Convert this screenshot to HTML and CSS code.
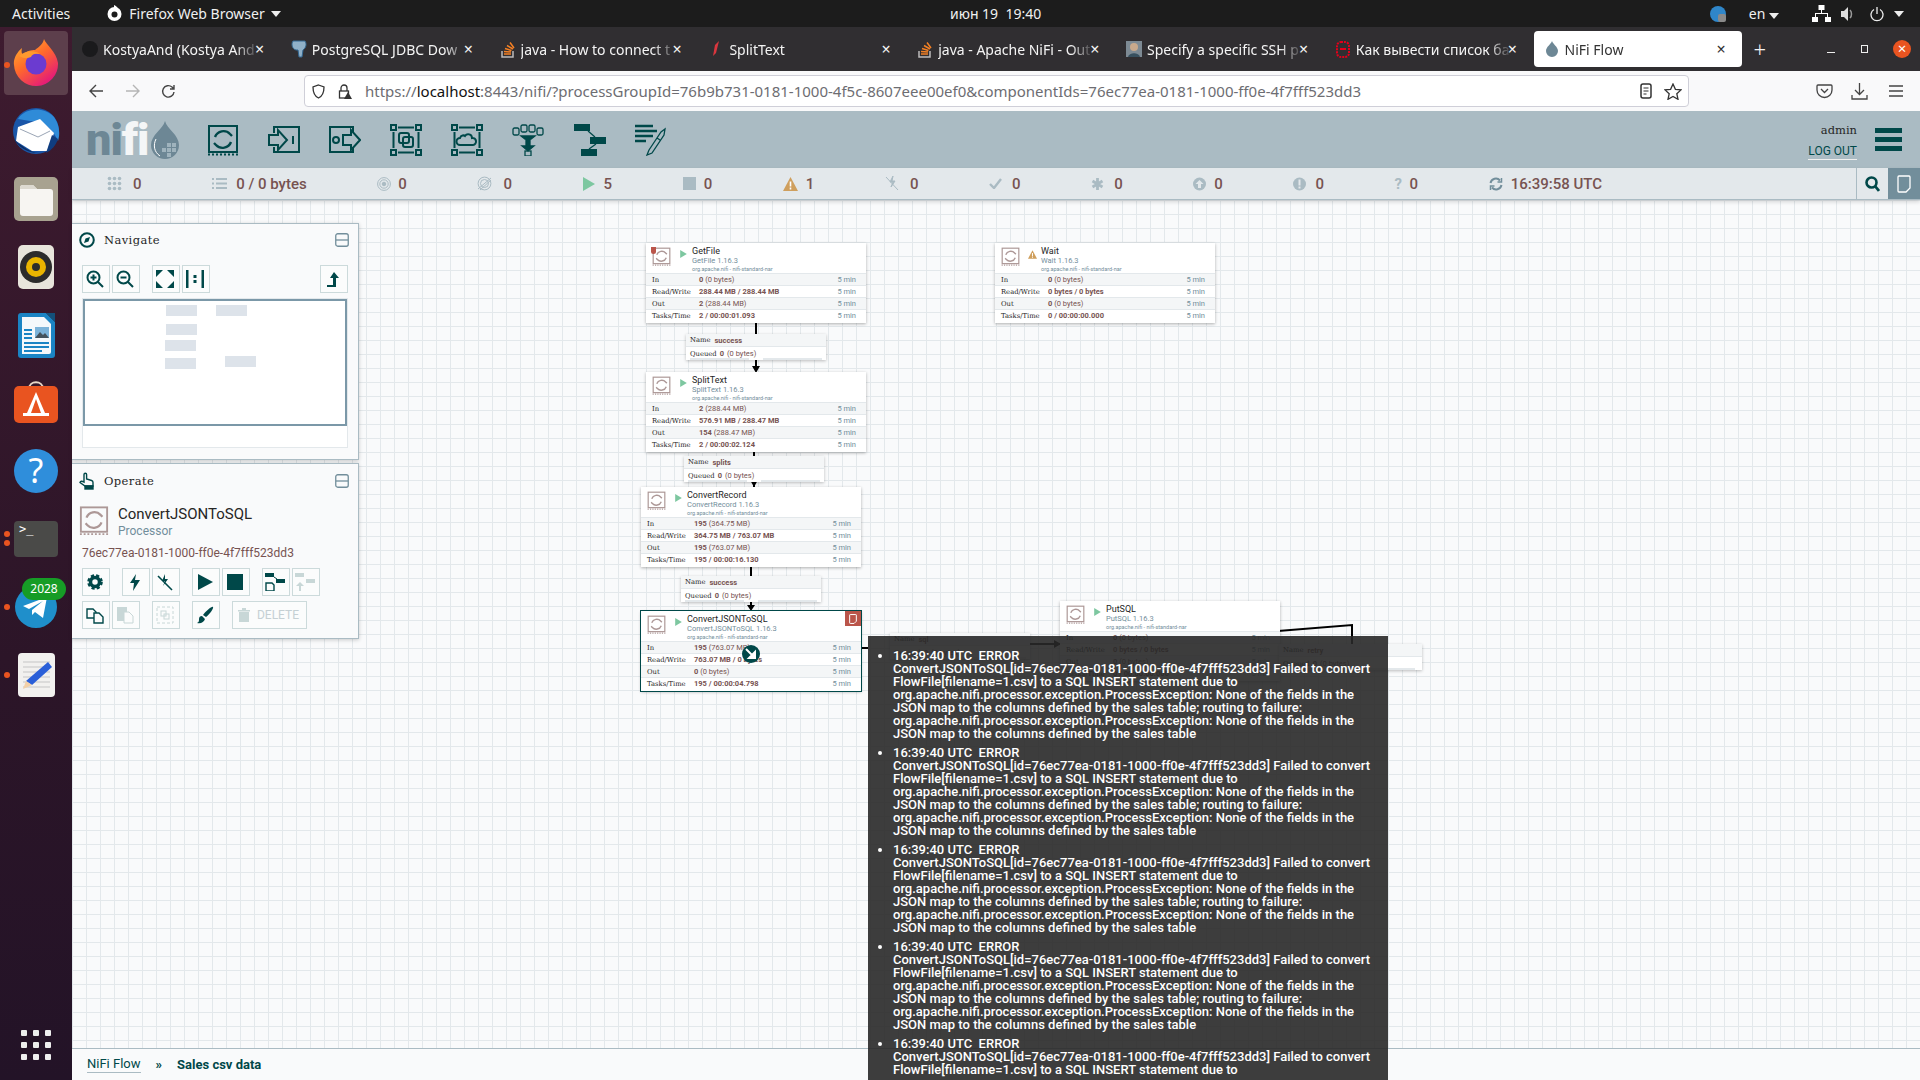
FILE: index.html
```html
<!DOCTYPE html>
<html lang="en">
<head>
  <meta charset="UTF-8">
  <title>NiFi Flow</title>
  <link rel="stylesheet" href="styles.css">
</head>
<body>
  <svg class="defs" width="0" height="0">
    <symbol id="proc" viewBox="0 0 32 32">
      <rect x="2" y="2" width="28" height="26" fill="none" stroke="currentColor" stroke-width="2"/>
      <path d="M1 30.500h30" stroke="currentColor" stroke-width="2" stroke-dasharray="2 2"/>
      <path d="M8 13a9 9 0 0 1 15-3l2 2" fill="none" stroke="currentColor" stroke-width="2.400"/>
      <path d="M24 18a9 9 0 0 1-15 3l-2-2" fill="none" stroke="currentColor" stroke-width="2.400"/>
    </symbol>
    <symbol id="play" viewBox="0 0 10 12"><path d="M0 0l10 6-10 6z" fill="currentColor"/></symbol>
    <symbol id="minimize" viewBox="0 0 14 14">
      <rect x="0.750" y="0.750" width="12.500" height="12.500" rx="2" fill="none" stroke="#728e9b" stroke-width="1.300"/>
      <path d="M1 7h12" stroke="#728e9b" stroke-width="1.300"/>
    </symbol>
  </svg>

  <header class="topbar">
    <span class="topbar-item activities">Activities</span>
    <span class="topbar-item app-menu">
      <svg width="17" height="17" viewBox="0 0 17 17"><circle cx="8.500" cy="9" r="7" fill="#fff"/><circle cx="8.500" cy="9.500" r="3" fill="#1d1d1d"/><path d="M8 0c3 1 4 3 4 5L8 5z" fill="#fff"/></svg>
      Firefox Web Browser <i class="caret"></i>
    </span>
    <span class="clock">июн 19&nbsp; 19:40</span>
    <span class="tray">
      <svg class="tray-dot" width="16" height="16" viewBox="0 0 16 16"><circle cx="8" cy="8" r="8" fill="#2f86c9"/><rect x="8" y="8" width="8" height="8" rx="2" fill="#8a8a8a"/></svg>
      <span class="tray-lang">en <i class="caret"></i></span>
      <svg class="tray-net" width="19" height="17" viewBox="0 0 19 17" fill="#fff"><rect x="6.500" y="0" width="6" height="5"/><rect x="0" y="12" width="6" height="5"/><rect x="13" y="12" width="6" height="5"/><path d="M9 5h1v3h6v4h-1V9H4v3H3V8h6z"/></svg>
      <svg class="tray-vol" width="13" height="14" viewBox="0 0 13 14"><path d="M0 4h3l4-4v14l-4-4H0z" fill="#ddd"/><path d="M9 3c2 2 2 6 0 8" fill="none" stroke="#999" stroke-width="1.500"/></svg>
      <svg class="tray-pow" width="14" height="16" viewBox="0 0 14 16"><path d="M4 3.500a6 6 0 1 0 6 0" fill="none" stroke="#eee" stroke-width="1.300"/><path d="M7 1v7" stroke="#eee" stroke-width="1.300"/></svg>
      <i class="caret"></i>
    </span>
  </header>

  <div class="desktop">
    <nav class="dock">
      <div class="dock-slot dock-active">
        <i class="run-dot"></i>
        <svg width="46" height="48" viewBox="0 0 46 48">
          <defs><linearGradient id="fx" x1="0" y1="0" x2="0.700" y2="1"><stop offset="0" stop-color="#ffbd2e"/><stop offset=".5" stop-color="#ff6a2b"/><stop offset="1" stop-color="#e3177c"/></linearGradient></defs>
          <path d="M31 0c2 6 12 12 14 24a22 22 0 0 1-44 2C0 20 4 13 9 9c-1 4 0 6 1 7 3-4 8-5 12-5 4-3 8-6 9-11z" fill="url(#fx)"/>
          <circle cx="23" cy="25" r="10.500" fill="#6b3bd0"/>
          <path d="M6 17c6-6 16-6 21-2-6-1-8 1-9 3-4 2-9 1-12-1z" fill="#ff9a2e"/>
        </svg>
      </div>
      <div class="dock-slot">
        <svg width="48" height="48" viewBox="0 0 48 48">
          <circle cx="24" cy="24" r="23" fill="#1a56a8"/>
          <path d="M6 12C12 2 30-2 42 10c6 8 6 18 4 24-6-14-16-20-28-20z" fill="#2f8bd8"/>
          <path d="M6 20l22-8 14 14-6 18H20L4 34z" fill="#fff"/>
          <path d="M8 22l18 8 12-6" fill="none" stroke="#9aa5b5" stroke-width="1"/>
          <path d="M2 32c4 8 14 14 24 14-8-1-14-6-20-10z" fill="#0c2f66"/>
          <path d="M40 28l-6 18c6-3 10-8 12-14z" fill="#0f3d80"/>
        </svg>
      </div>
      <div class="dock-slot">
        <svg width="44" height="44" viewBox="0 0 44 44">
          <rect width="44" height="44" rx="5" fill="#a8a290"/>
          <path d="M6 11a3 3 0 0 1 3-3h10l4 4h13a3 3 0 0 1 3 3v21a3 3 0 0 1-3 3H9a3 3 0 0 1-3-3z" fill="#f7f5f2"/>
          <path d="M6 11a3 3 0 0 1 3-3h10l4 4H6z" fill="#ddd9d0"/>
        </svg>
      </div>
      <div class="dock-slot">
        <svg width="36" height="44" viewBox="0 0 36 44">
          <rect width="36" height="44" rx="5" fill="#e8e5dc"/>
          <circle cx="18" cy="22" r="16" fill="#2c2c2c"/>
          <circle cx="18" cy="22" r="10" fill="#e9b500"/>
          <circle cx="18" cy="22" r="4" fill="#2c2c2c"/>
        </svg>
      </div>
      <div class="dock-slot">
        <svg width="37" height="45" viewBox="0 0 37 45">
          <path d="M3 0h25l9 9v33a3 3 0 0 1-3 3H3a3 3 0 0 1-3-3V3a3 3 0 0 1 3-3z" fill="#1a84c4"/>
          <path d="M4 4h22l7 7v28a2 2 0 0 1-2 2H4z" fill="#f4f8fb"/>
          <path d="M28 0h9v9z" fill="#13507a"/>
          <path d="M6 16h8v2H6zM6 20h8v2H6zM6 24h8v2H6zM6 29h25v2H6zM6 33h25v2H6zM6 37h18v2H6z" fill="#1a84c4"/>
          <rect x="17" y="14" width="14" height="11" fill="#7cb3d9"/>
          <path d="M17 25l5-6 3 3 2-2 4 5z" fill="#44525c"/>
        </svg>
      </div>
      <div class="dock-slot">
        <svg width="44" height="44" viewBox="0 0 44 44">
          <path d="M15 8c0-9 14-9 14 0" fill="none" stroke="#e8d8c8" stroke-width="2"/>
          <rect y="5" width="44" height="37" rx="5" fill="#e95420"/>
          <path d="M22 11l-9 21h-4v3h26v-3h-4zM22 18l5 14H17z" fill="#fff"/>
        </svg>
      </div>
      <div class="dock-slot">
        <svg width="44" height="44" viewBox="0 0 44 44">
          <circle cx="22" cy="22" r="22" fill="#2f8edb"/>
          <text class="dock-help" x="22" y="34" text-anchor="middle">?</text>
        </svg>
      </div>
      <div class="dock-slot">
        <i class="run-dot run-dot-a"></i><i class="run-dot run-dot-b"></i>
        <div class="term-icon">&gt;_</div>
      </div>
      <div class="dock-slot">
        <i class="run-dot"></i>
        <svg width="42" height="42" viewBox="0 0 42 42">
          <circle cx="21" cy="21" r="21" fill="#1f8fcb"/>
          <path d="M8 20l24-9-4 21-8-6-3 3v-5l11-9-14 8z" fill="#fff"/>
        </svg>
        <span class="dock-badge">2028</span>
      </div>
      <div class="dock-slot">
        <i class="run-dot"></i>
        <svg width="37" height="44" viewBox="0 0 37 44">
          <rect width="37" height="44" rx="4" fill="#f2f1ef"/>
          <path d="M5 9h27M5 14h27M5 19h27M5 24h27M5 29h27M5 34h27" stroke="#c5c5c5" stroke-width="1"/>
          <path d="M30 9l4 5-20 18-6-4z" fill="#2a5fd8"/>
          <path d="M8 28l6 4-9 4z" fill="#f2d0a8"/>
        </svg>
      </div>
      <div class="dock-apps"><i></i><i></i><i></i><i></i><i></i><i></i><i></i><i></i><i></i></div>
    </nav>

    <div class="browser">
      <div class="tabs">
        <div class="tab"><svg class="fav" width="16" height="16" viewBox="0 0 16 16"><circle cx="8" cy="8" r="8" fill="#1a1a1c"/></svg><span class="tab-title">KostyaAnd (Kostya And</span><span class="tab-x">×</span></div>
        <div class="tab"><svg class="fav" width="16" height="18" viewBox="0 0 16 18"><path d="M2 1h12c2 3 1 7-2 9l-1 7H8L7 10H5C1 9 0 4 2 1z" fill="#8fb0c8" stroke="#336791"/></svg><span class="tab-title">PostgreSQL JDBC Dow</span><span class="tab-x">×</span></div>
        <div class="tab"><svg class="fav" width="14" height="17" viewBox="0 0 14 17"><path d="M1 10v6h11v-6" fill="none" stroke="#bcbbbb" stroke-width="1.500"/><path d="M3 13h7M3 10.500l7 .6M4 7.500l6.500 2M6 4.500l6 3.500M9 1.500l4 5.500" stroke="#f48024" stroke-width="1.500"/></svg><span class="tab-title">java - How to connect t</span><span class="tab-x">×</span></div>
        <div class="tab"><svg class="fav" width="8" height="16" viewBox="0 0 8 16"><path d="M7 0L3 4 1 15l3-3z" fill="#d9363e"/></svg><span class="tab-title">SplitText</span><span class="tab-x">×</span></div>
        <div class="tab"><svg class="fav" width="14" height="17" viewBox="0 0 14 17"><path d="M1 10v6h11v-6" fill="none" stroke="#bcbbbb" stroke-width="1.500"/><path d="M3 13h7M3 10.500l7 .6M4 7.500l6.500 2M6 4.500l6 3.500M9 1.500l4 5.500" stroke="#f48024" stroke-width="1.500"/></svg><span class="tab-title">java - Apache NiFi - Out</span><span class="tab-x">×</span></div>
        <div class="tab"><svg class="fav" width="16" height="16" viewBox="0 0 16 16"><rect width="16" height="16" fill="#7d8a94"/><circle cx="8" cy="6" r="4" fill="#c9a98c"/><path d="M2 16c1-5 11-5 12 0z" fill="#37505f"/></svg><span class="tab-title">Specify a specific SSH p</span><span class="tab-x">×</span></div>
        <div class="tab"><svg class="fav" width="14" height="17" viewBox="0 0 14 17"><rect x="1" y="1" width="12" height="15" rx="4" fill="none" stroke="#e3001b" stroke-width="2" stroke-dasharray="2 1"/><path d="M4 8h6" stroke="#e3001b" stroke-width="2"/></svg><span class="tab-title">Как вывести список ба</span><span class="tab-x">×</span></div>
        <div class="tab tab-active"><svg class="fav" width="12" height="16" viewBox="0 0 12 16"><path d="M6 0c1 3 6 6 6 10a6 6 0 0 1-12 0c0-4 5-7 6-10z" fill="#6d8795"/></svg><span class="tab-title">NiFi Flow</span><span class="tab-x">×</span></div>
        <span class="tab-new">+</span>
        <span class="win-controls">
          <i class="win-min"></i>
          <i class="win-max"></i>
          <span class="win-close">×</span>
        </span>
      </div>

      <div class="navbar">
        <svg class="nav-back" width="15" height="14" viewBox="0 0 15 14"><path d="M7 1L1 7l6 6M1 7h13" fill="none" stroke="#444" stroke-width="1.400"/></svg>
        <svg class="nav-fwd" width="15" height="14" viewBox="0 0 15 14"><path d="M8 1l6 6-6 6M14 7H1" fill="none" stroke="#b5b5b5" stroke-width="1.400"/></svg>
        <svg class="nav-reload" width="15" height="15" viewBox="0 0 15 15"><path d="M13 8a5.700 5.700 0 1 1-2-5l2 2M13 1v4H9" fill="none" stroke="#444" stroke-width="1.400"/></svg>
        <div class="urlbar">
          <svg class="url-shield" width="13" height="15" viewBox="0 0 13 15"><path d="M6.500 1L12 3c0 5-1 9-5.500 11C2 12 1 8 1 3z" fill="none" stroke="#333" stroke-width="1.300"/></svg>
          <svg class="url-lock" width="14" height="15" viewBox="0 0 14 15"><path d="M3 7V4a3 3 0 0 1 6 0v3" fill="none" stroke="#333" stroke-width="1.300"/><rect x="1.500" y="7" width="9" height="7" fill="none" stroke="#333" stroke-width="1.300"/><path d="M10 8l4 7H6z" fill="#333"/></svg>
          <span class="url-text">https://<b>localhost</b>:8443/nifi/?processGroupId=76b9b731-0181-1000-4f5c-8607eee00ef0&amp;componentIds=76ec77ea-0181-1000-ff0e-4f7fff523dd3</span>
          <svg class="url-reader" width="12" height="16" viewBox="0 0 12 16"><rect x="1" y="1" width="10" height="14" rx="2" fill="none" stroke="#333" stroke-width="1.500"/><path d="M3.500 5h5M3.500 8h5M3.500 11h3" stroke="#333" stroke-width="1.200"/></svg>
          <svg class="url-star" width="18" height="17" viewBox="0 0 18 17"><path d="M9 1l2.400 5.300 5.600.6-4.200 3.800 1.200 5.600L9 13.500l-5 2.800 1.200-5.600L1 6.900l5.600-.6z" fill="none" stroke="#333" stroke-width="1.300"/></svg>
        </div>
        <svg class="nav-pocket" width="17" height="15" viewBox="0 0 17 15"><path d="M2 1h13a1 1 0 0 1 1 1v4a7.500 7.500 0 0 1-15 0V2a1 1 0 0 1 1-1z" fill="none" stroke="#444" stroke-width="1.300"/><path d="M5 5l3.500 3.500L12 5" fill="none" stroke="#444" stroke-width="1.300"/></svg>
        <svg class="nav-dl" width="17" height="18" viewBox="0 0 17 18"><path d="M8.500 1v11M4 8l4.500 4.500L13 8M1 13v4h15v-4" fill="none" stroke="#444" stroke-width="1.300"/></svg>
        <svg class="nav-menu" width="14" height="12" viewBox="0 0 14 12"><path d="M0 1h14M0 6h14M0 11h14" stroke="#444" stroke-width="1.300"/></svg>
      </div>

      <div class="nf-header">
        <div class="nf-logo">
          <span class="nf-logo-ni">ni</span><span class="nf-logo-fi">fi</span>
          <svg class="nf-drop" width="28" height="38" viewBox="0 0 28 38"><path d="M14 0c2 8 14 14 14 24a14 14 0 0 1-28 0C0 14 12 8 14 0z" fill="#6d8795"/><path d="M5 18c-3 6-2 13 4 17" fill="none" stroke="#fff" stroke-width="1"/><path d="M16 22h4v4h-4zM21 22h4v4h-4zM11 27h4v4h-4zM16 27h4v4h-4zM21 27h4v4h-4zM16 32h4v4h-4z" fill="#9fb3bd"/></svg>
        </div>
        <div class="nf-tools">
          <svg class="nf-tool" width="32" height="32" viewBox="0 0 32 32"><use href="#proc"/></svg>
          <svg class="nf-tool" width="32" height="32" viewBox="0 0 32 32" fill="none" stroke="currentColor" stroke-width="2"><path d="M6 9V3h25v25H6v-5"/><path d="M1 11h9V6l9 10-9 10v-5H1z"/><path d="M25 12v8"/></svg>
          <svg class="nf-tool" width="32" height="32" viewBox="0 0 32 32" fill="none" stroke="currentColor" stroke-width="2"><path d="M24 8V3H1v25h23v-5"/><circle cx="7" cy="16" r="3"/><path d="M14 11h8V6l9 10-9 10v-5h-8z"/></svg>
          <svg class="nf-tool" width="32" height="32" viewBox="0 0 32 32" fill="none" stroke="currentColor" stroke-width="2"><rect x="1" y="1" width="5" height="5"/><rect x="26" y="1" width="5" height="5"/><rect x="1" y="26" width="5" height="5"/><rect x="26" y="26" width="5" height="5"/><path d="M8 3.500h16M8 28.500h16M3.500 8v16M28.500 8v16"/><rect x="9" y="9" width="10" height="10" rx="2"/><rect x="13" y="13" width="10" height="10" rx="2"/></svg>
          <svg class="nf-tool" width="32" height="32" viewBox="0 0 32 32" fill="none" stroke="currentColor" stroke-width="2"><rect x="1" y="1" width="5" height="5"/><rect x="26" y="1" width="5" height="5"/><rect x="1" y="26" width="5" height="5"/><rect x="26" y="26" width="5" height="5"/><path d="M8 3.500h16M8 28.500h16M3.500 8v16M28.500 8v16"/><path d="M9 21a3.500 3.500 0 0 1 0-7c1-3 4-3 5-2 2-3 7-2 7 2a3.500 3.500 0 0 1 1 7z"/></svg>
          <svg class="nf-tool" width="33" height="32" viewBox="0 0 33 32" fill="none" stroke="currentColor" stroke-width="1.300"><rect x="1" y="4" width="6" height="7" rx="1.500"/><rect x="9" y="1" width="6" height="7" rx="1.500"/><rect x="17" y="1" width="6" height="7" rx="1.500"/><rect x="25" y="4" width="6" height="7" rx="1.500"/><path d="M9 12h14l-4 3h-6z" fill="currentColor"/><path d="M14 15h4v7h4l-6 5-6-5h4z" fill="currentColor"/><rect x="13" y="27" width="6" height="5"/></svg>
          <svg class="nf-tool" width="32" height="32" viewBox="0 0 32 32" fill="currentColor"><rect x="0" y="0" width="16" height="7"/><rect x="16" y="13" width="16" height="7"/><rect x="7" y="25" width="16" height="7"/><path d="M14 7l7 6M22 20l-7 5" stroke="currentColor" stroke-width="1.300"/></svg>
          <svg class="nf-tool" width="32" height="32" viewBox="0 0 32 32" fill="none" stroke="currentColor"><path d="M0 2h18M0 7h22M0 12h18M0 17h11" stroke-width="2.600"/><path d="M14 26L26 8l4-3-1 6-12 18-5 2zM22 14l3 2" stroke-width="1.300"/></svg>
        </div>
        <div class="nf-user">
          <span class="nf-user-name">admin</span>
          <a class="nf-logout">LOG OUT</a>
        </div>
        <div class="nf-burger"><i></i><i></i><i></i></div>
      </div>

      <div class="nf-status">
        <span class="stat"><svg class="st-thread" width="15" height="15" viewBox="0 0 15 15" fill="#aabbc3"><circle cx="2.500" cy="2.500" r="1.800"/><circle cx="7.500" cy="2.500" r="1.800"/><circle cx="12.500" cy="2.500" r="1.800"/><circle cx="2.500" cy="7.500" r="1.800"/><circle cx="7.500" cy="7.500" r="1.800"/><circle cx="12.500" cy="7.500" r="1.800"/><circle cx="2.500" cy="12.500" r="1.800"/><circle cx="7.500" cy="12.500" r="1.800"/><circle cx="12.500" cy="12.500" r="1.800"/></svg>0</span>
        <span class="stat"><svg class="st-list" width="15" height="13" viewBox="0 0 15 13" fill="#aabbc3"><path d="M0 1h2v2H0zM4 1h11v2H4zM0 5.500h2v2H0zM4 5.500h11v2H4zM0 10h2v2H0zM4 10h11v2H4z"/></svg>0 / 0 bytes</span>
        <span class="stat"><svg class="st-target" width="14" height="14" viewBox="0 0 14 14" fill="none" stroke="#aabbc3"><circle cx="7" cy="7" r="6.400"/><circle cx="7" cy="7" r="4.200"/><circle cx="7" cy="7" r="1.800" fill="#aabbc3"/></svg>0</span>
        <span class="stat"><svg class="st-off" width="15" height="15" viewBox="0 0 15 15" fill="none" stroke="#aabbc3"><circle cx="7.500" cy="7.500" r="6.400"/><circle cx="7.500" cy="7.500" r="4"/><path d="M1 13L14 2M3 14L14 4" /></svg>0</span>
        <span class="stat"><svg class="st-play" width="12" height="14" viewBox="0 0 12 14"><path d="M0 0l12 7-12 7z" fill="#7dc7a0"/></svg>5</span>
        <span class="stat"><svg class="st-stop" width="13" height="13" viewBox="0 0 13 13"><rect width="13" height="13" fill="#aabbc3"/></svg>0</span>
        <span class="stat"><svg class="st-warn" width="15" height="14" viewBox="0 0 15 14"><path d="M7.500 0L15 14H0z" fill="#cf9f5d"/><path d="M6.700 4.500h1.600v5H6.700zM6.700 10.500h1.600v2H6.700z" fill="#fff"/></svg>1</span>
        <span class="stat"><svg class="st-inv" width="14" height="15" viewBox="0 0 14 15" fill="#aabbc3"><path d="M8 0L5 6h3l-2 5 4-6H7zM1 1l12 13" stroke="#aabbc3"/></svg>0</span>
        <span class="stat"><svg class="st-check" width="13" height="11" viewBox="0 0 13 11"><path d="M1 6l4 4 7-9" fill="none" stroke="#aabbc3" stroke-width="2.400"/></svg>0</span>
        <span class="stat"><svg class="st-star" width="13" height="14" viewBox="0 0 13 14"><path d="M6.500 1v12M1.500 4l10 6M11.500 4l-10 6" stroke="#aabbc3" stroke-width="2.800"/></svg>0</span>
        <span class="stat"><svg class="st-up" width="13" height="14" viewBox="0 0 13 14"><circle cx="6.500" cy="7" r="6.500" fill="#aabbc3"/><path d="M6.500 3l4 4H8v4H5V7H2.500z" fill="#e3e8eb"/></svg>0</span>
        <span class="stat"><svg class="st-excl" width="13" height="14" viewBox="0 0 13 14"><circle cx="6.500" cy="7" r="6.500" fill="#aabbc3"/><path d="M5.500 2.500h2v6h-2zM5.500 9.500h2v2h-2z" fill="#e3e8eb"/></svg>0</span>
        <span class="stat"><span class="st-q">?</span>0</span>
        <span class="stat"><svg class="st-refresh" width="14" height="14" viewBox="0 0 14 14" fill="none" stroke="#728e9b" stroke-width="2"><path d="M1.500 6a5.500 5.500 0 0 1 9.500-2.500M12.500 8A5.500 5.500 0 0 1 3 10.500"/><path d="M12.500 1v4h-4M1.500 13V9h4" stroke-width="1.500"/></svg>16:39:58 UTC</span>
        <span class="st-search">
          <svg width="15" height="16" viewBox="0 0 15 16"><circle cx="6.500" cy="6.500" r="5" fill="none" stroke="#004849" stroke-width="2.600"/><path d="M10 10l4 5" stroke="#004849" stroke-width="2.800"/></svg>
        </span>
        <span class="st-bulletin">
          <svg width="14" height="18" viewBox="0 0 14 18"><path d="M2 1h10a1 1 0 0 1 1 1v11l-4 4H2a1 1 0 0 1-1-1V2a1 1 0 0 1 1-1z" fill="none" stroke="#fff" stroke-width="1.300"/></svg>
        </span>
      </div>

      <main class="canvas">
        <!-- connections -->
        <svg class="links" width="1848" height="848">
          <g fill="none" stroke="#000" stroke-width="2">
            <path d="M684 122v12M684 160v10"/>
            <path d="M682 251v5M682 285v2"/>
            <path d="M679 366v10M679 402v7"/>
            <path d="M789 448h7M958 444h30"/>
            <path d="M1206 431l74-6v19"/>
          </g>
          <path d="M680 166h8l-4 7zM678 280h8l-4 7zM675 405h8l-4 6zM982 440l7 4-7 4z"/>
        </svg>

        <!-- navigate / operate palette -->
        <aside class="palette">
          <section class="panel panel-nav">
            <div class="panel-head">
              <svg width="16" height="16" viewBox="0 0 16 16"><circle cx="8" cy="8" r="6.800" fill="none" stroke="#004849" stroke-width="2"/><path d="M11 5L9.500 9.500 5 11l1.500-4.500z" fill="#004849"/></svg>
              <span class="panel-title">Navigate</span>
              <svg class="panel-min" width="14" height="14"><use href="#minimize"/></svg>
            </div>
            <div class="btn-row">
              <span class="tbtn"><svg width="18" height="18" viewBox="0 0 18 18" fill="none" stroke="#004849" stroke-width="2"><circle cx="7.500" cy="7.500" r="6"/><path d="M12 12l5 5M4.500 7.500h6M7.500 4.500v6"/></svg></span>
              <span class="tbtn"><svg width="18" height="18" viewBox="0 0 18 18" fill="none" stroke="#004849" stroke-width="2"><circle cx="7.500" cy="7.500" r="6"/><path d="M12 12l5 5M4.500 7.500h6"/></svg></span>
              <span class="tbtn tbtn-sep"><svg width="18" height="18" viewBox="0 0 18 18" fill="#004849"><path d="M0 0h7L0 7zM18 0h-7l7 7zM0 18h7l-7-7zM18 18h-7l7-7z"/></svg></span>
              <span class="tbtn"><svg width="18" height="18" viewBox="0 0 18 18" fill="#004849"><path d="M0 0h2.500v18H0zM15.500 0H18v18h-2.500zM7.500 5h3v3h-3zM7.500 10h3v3h-3z"/></svg></span>
              <span class="tbtn tbtn-end"><svg width="12" height="15" viewBox="0 0 12 15" fill="#004849"><path d="M7 0l5 6H9v9H0v-2h6V6H3z"/></svg></span>
            </div>
            <div class="birdseye">
              <div class="birdseye-view">
                <i class="mini mini-a"></i><i class="mini mini-b"></i><i class="mini mini-c"></i><i class="mini mini-d"></i><i class="mini mini-e"></i><i class="mini mini-f"></i>
              </div>
            </div>
          </section>
          <section class="panel panel-op">
            <div class="panel-head">
              <svg width="16" height="18" viewBox="0 0 16 18" fill="none" stroke="#004849" stroke-width="1.400"><path d="M5 10V2.500a1.300 1.300 0 0 1 2.600 0V7l5 1.500a2 2 0 0 1 1.400 2V14H6L1 10.500c.5-1.500 2-1.500 4-.5z"/><rect x="6" y="14" width="8" height="3" fill="#004849"/></svg>
              <span class="panel-title">Operate</span>
              <svg class="panel-min" width="14" height="14"><use href="#minimize"/></svg>
            </div>
            <div class="op-sel">
              <svg class="op-icon" width="30" height="31"><use href="#proc"/></svg>
              <div>
                <div class="op-name">ConvertJSONToSQL</div>
                <div class="op-type">Processor</div>
              </div>
            </div>
            <div class="op-id">76ec77ea-0181-1000-ff0e-4f7fff523dd3</div>
            <div class="btn-row">
              <span class="tbtn"><svg width="16" height="16" viewBox="0 0 16 16"><circle cx="8" cy="8" r="4.500" fill="none" stroke="#004849" stroke-width="3.500"/><circle cx="8" cy="8" r="6.300" fill="none" stroke="#004849" stroke-width="3" stroke-dasharray="3 2"/></svg></span>
              <span class="tbtn tbtn-sep"><svg width="10" height="17" viewBox="0 0 10 17"><path d="M6 0L0 9h4l-1 8 7-11H5z" fill="#004849"/></svg></span>
              <span class="tbtn"><svg width="16" height="17" viewBox="0 0 16 17" fill="#004849"><path d="M8 0L5 7h3L6 12l5-7H8z"/><path d="M1 2l14 14" stroke="#004849" stroke-width="1.600"/></svg></span>
              <span class="tbtn tbtn-sep"><svg width="15" height="16" viewBox="0 0 15 16"><path d="M0 0l15 8-15 8z" fill="#004849"/></svg></span>
              <span class="tbtn"><svg width="16" height="16"><rect width="16" height="16" fill="#004849"/></svg></span>
              <span class="tbtn tbtn-sep"><svg width="20" height="18" viewBox="0 0 20 18" fill="#004849"><rect width="9" height="4"/><rect x="11" y="6" width="9" height="4"/><path d="M9 4l3 2" stroke="#004849"/><path d="M1 10h6l2 2v6H1z" fill="none" stroke="#004849" stroke-width="1.400"/></svg></span>
              <span class="tbtn tbtn-off"><svg width="20" height="18" viewBox="0 0 20 18" fill="#004849"><rect width="9" height="4"/><rect x="11" y="6" width="9" height="4"/><path d="M5 9l4 4H6v5H4v-5H1z"/></svg></span>
            </div>
            <div class="btn-row">
              <span class="tbtn"><svg width="18" height="18" viewBox="0 0 18 18" fill="none" stroke="#004849" stroke-width="1.400"><path d="M1 3h6l3 3v6H1z"/><path d="M8 7h5l4 4v6H8z" fill="#fbfcfc"/></svg></span>
              <span class="tbtn tbtn-off"><svg width="18" height="18" viewBox="0 0 18 18"><rect x="1" y="1" width="10" height="14" fill="#004849"/><path d="M8 6h5l4 4v7H8z" fill="#fbfcfc" stroke="#004849"/></svg></span>
              <span class="tbtn tbtn-off tbtn-sep"><svg width="18" height="18" viewBox="0 0 18 18" fill="none" stroke="#004849"><rect x="1" y="1" width="16" height="16" stroke-dasharray="3 2"/><rect x="5" y="5" width="5" height="5"/><rect x="8" y="8" width="5" height="5"/></svg></span>
              <span class="tbtn tbtn-sep"><svg width="18" height="18" viewBox="0 0 18 18" fill="#004849"><path d="M17 1c1 1-3 7-7 10L7 9c3-4 9-9 10-8z"/><path d="M6 10l3 3c-1 3-4 5-8 4 2-1 2-2 2-4 0-2 1-3 3-3z"/></svg></span>
              <span class="tbtn tbtn-off tbtn-sep tbtn-delete"><svg width="12" height="14" viewBox="0 0 12 14" fill="#004849"><path d="M0 2h12v1.500H0zM4 0h4v2H4zM1 4h10v10H1z"/></svg>DELETE</span>
            </div>
          </section>
        </aside>

        <!-- processors -->
        <article class="proc proc-getfile">
          <svg class="proc-ico" width="19" height="19"><use href="#proc"/></svg>
          <i class="proc-shield"></i>
          <svg class="proc-run" width="7" height="8"><use href="#play"/></svg>
          <div class="proc-name">GetFile</div>
          <div class="proc-type">GetFile 1.16.3</div>
          <div class="proc-bundle">org.apache.nifi - nifi-standard-nar</div>
          <div class="rows">
            <div class="row"><span class="lbl">In</span><span class="val"><b>0</b> (0 bytes)</span><span class="age">5 min</span></div>
            <div class="row"><span class="lbl">Read/Write</span><span class="val"><b>288.44 MB / 288.44 MB</b></span><span class="age">5 min</span></div>
            <div class="row"><span class="lbl">Out</span><span class="val"><b>2</b> (288.44 MB)</span><span class="age">5 min</span></div>
            <div class="row"><span class="lbl">Tasks/Time</span><span class="val"><b>2 / 00:00:01.093</b></span><span class="age">5 min</span></div>
          </div>
        </article>

        <article class="proc proc-wait">
          <svg class="proc-ico" width="19" height="19"><use href="#proc"/></svg>
          <svg class="proc-run proc-warn" width="9" height="9" viewBox="0 0 15 14"><path d="M7.500 0L15 14H0z" fill="#cf9f5d"/><path d="M6.700 4.500h1.600v5H6.700zM6.700 10.500h1.600v2H6.700z" fill="#fff"/></svg>
          <div class="proc-name">Wait</div>
          <div class="proc-type">Wait 1.16.3</div>
          <div class="proc-bundle">org.apache.nifi - nifi-standard-nar</div>
          <div class="rows">
            <div class="row"><span class="lbl">In</span><span class="val"><b>0</b> (0 bytes)</span><span class="age">5 min</span></div>
            <div class="row"><span class="lbl">Read/Write</span><span class="val"><b>0 bytes / 0 bytes</b></span><span class="age">5 min</span></div>
            <div class="row"><span class="lbl">Out</span><span class="val"><b>0</b> (0 bytes)</span><span class="age">5 min</span></div>
            <div class="row"><span class="lbl">Tasks/Time</span><span class="val"><b>0 / 00:00:00.000</b></span><span class="age">5 min</span></div>
          </div>
        </article>

        <article class="proc proc-split">
          <svg class="proc-ico" width="19" height="19"><use href="#proc"/></svg>
          <svg class="proc-run" width="7" height="8"><use href="#play"/></svg>
          <div class="proc-name">SplitText</div>
          <div class="proc-type">SplitText 1.16.3</div>
          <div class="proc-bundle">org.apache.nifi - nifi-standard-nar</div>
          <div class="rows">
            <div class="row"><span class="lbl">In</span><span class="val"><b>2</b> (288.44 MB)</span><span class="age">5 min</span></div>
            <div class="row"><span class="lbl">Read/Write</span><span class="val"><b>576.91 MB / 288.47 MB</b></span><span class="age">5 min</span></div>
            <div class="row"><span class="lbl">Out</span><span class="val"><b>154</b> (288.47 MB)</span><span class="age">5 min</span></div>
            <div class="row"><span class="lbl">Tasks/Time</span><span class="val"><b>2 / 00:00:02.124</b></span><span class="age">5 min</span></div>
          </div>
        </article>

        <article class="proc proc-record">
          <svg class="proc-ico" width="19" height="19"><use href="#proc"/></svg>
          <svg class="proc-run" width="7" height="8"><use href="#play"/></svg>
          <div class="proc-name">ConvertRecord</div>
          <div class="proc-type">ConvertRecord 1.16.3</div>
          <div class="proc-bundle">org.apache.nifi - nifi-standard-nar</div>
          <div class="rows">
            <div class="row"><span class="lbl">In</span><span class="val"><b>195</b> (364.75 MB)</span><span class="age">5 min</span></div>
            <div class="row"><span class="lbl">Read/Write</span><span class="val"><b>364.75 MB / 763.07 MB</b></span><span class="age">5 min</span></div>
            <div class="row"><span class="lbl">Out</span><span class="val"><b>195</b> (763.07 MB)</span><span class="age">5 min</span></div>
            <div class="row"><span class="lbl">Tasks/Time</span><span class="val"><b>195 / 00:00:16.130</b></span><span class="age">5 min</span></div>
          </div>
        </article>

        <article class="proc proc-json proc-selected">
          <svg class="proc-ico" width="19" height="19"><use href="#proc"/></svg>
          <svg class="proc-run" width="7" height="8"><use href="#play"/></svg>
          <div class="proc-name">ConvertJSONToSQL</div>
          <div class="proc-type">ConvertJSONToSQL 1.16.3</div>
          <div class="proc-bundle">org.apache.nifi - nifi-standard-nar</div>
          <span class="proc-bulletin"><svg width="8" height="10" viewBox="0 0 14 18"><path d="M2 1h10a1 1 0 0 1 1 1v11l-4 4H2a1 1 0 0 1-1-1V2a1 1 0 0 1 1-1z" fill="none" stroke="#fff" stroke-width="1.800"/></svg></span>
          <div class="rows">
            <div class="row"><span class="lbl">In</span><span class="val"><b>195</b> (763.07 MB)</span><span class="age">5 min</span></div>
            <div class="row"><span class="lbl">Read/Write</span><span class="val"><b>763.07 MB / 0 bytes</b></span><span class="age">5 min</span></div>
            <div class="row"><span class="lbl">Out</span><span class="val"><b>0</b> (0 bytes)</span><span class="age">5 min</span></div>
            <div class="row"><span class="lbl">Tasks/Time</span><span class="val"><b>195 / 00:00:04.798</b></span><span class="age">5 min</span></div>
          </div>
          <span class="proc-cursor"><svg width="12" height="12" viewBox="0 0 12 12"><path d="M1 1l8 8M10 4v6H4z" stroke="#fff" stroke-width="2" fill="#fff"/></svg></span>
        </article>

        <article class="proc proc-put">
          <svg class="proc-ico" width="19" height="19"><use href="#proc"/></svg>
          <svg class="proc-run" width="7" height="8"><use href="#play"/></svg>
          <div class="proc-name">PutSQL</div>
          <div class="proc-type">PutSQL 1.16.3</div>
          <div class="proc-bundle">org.apache.nifi - nifi-standard-nar</div>
          <div class="rows">
            <div class="row"><span class="lbl">In</span><span class="val"><b>0</b> (0 bytes)</span><span class="age">5 min</span></div>
            <div class="row"><span class="lbl">Read/Write</span><span class="val"><b>0 bytes / 0 bytes</b></span><span class="age">5 min</span></div>
            <div class="row"><span class="lbl">Out</span><span class="val"><b>0</b> (0 bytes)</span><span class="age">5 min</span></div>
            <div class="row"><span class="lbl">Tasks/Time</span><span class="val"><b>0 / 00:00:00.000</b></span><span class="age">5 min</span></div>
          </div>
        </article>

        <div class="conn conn-a"><div class="conn-name"><span class="lbl">Name</span><b>success</b></div><div class="conn-queue"><span class="lbl">Queued</span><b>0</b> (0 bytes)<i class="bar bar-l"></i><i class="bar bar-r"></i></div></div>
        <div class="conn conn-b"><div class="conn-name"><span class="lbl">Name</span><b>splits</b></div><div class="conn-queue"><span class="lbl">Queued</span><b>0</b> (0 bytes)<i class="bar bar-l"></i><i class="bar bar-r"></i></div></div>
        <div class="conn conn-c"><div class="conn-name"><span class="lbl">Name</span><b>success</b></div><div class="conn-queue"><span class="lbl">Queued</span><b>0</b> (0 bytes)<i class="bar bar-l"></i><i class="bar bar-r"></i></div></div>
        <div class="conn conn-d"><div class="conn-name"><span class="lbl">Name</span><b>sql</b></div><div class="conn-queue"><span class="lbl">Queued</span><b>0</b> (0 bytes)<i class="bar bar-l"></i><i class="bar bar-r"></i></div></div>
        <div class="conn conn-e"><div class="conn-name"><span class="lbl">Name</span><b>retry</b></div><div class="conn-queue"><span class="lbl">Queued</span><b>0</b> (0 bytes)<i class="bar bar-l"></i><i class="bar bar-r"></i></div></div>

        <!-- bulletin tooltip -->
        <ul class="bulletins">
          <li>16:39:40 UTC&nbsp; ERROR<br>ConvertJSONToSQL[id=76ec77ea-0181-1000-ff0e-4f7fff523dd3] Failed to convert FlowFile[filename=1.csv] to a SQL INSERT statement due to org.apache.nifi.processor.exception.ProcessException: None of the fields in the JSON map to the columns defined by the sales table; routing to failure: org.apache.nifi.processor.exception.ProcessException: None of the fields in the JSON map to the columns defined by the sales table</li>
          <li>16:39:40 UTC&nbsp; ERROR<br>ConvertJSONToSQL[id=76ec77ea-0181-1000-ff0e-4f7fff523dd3] Failed to convert FlowFile[filename=1.csv] to a SQL INSERT statement due to org.apache.nifi.processor.exception.ProcessException: None of the fields in the JSON map to the columns defined by the sales table; routing to failure: org.apache.nifi.processor.exception.ProcessException: None of the fields in the JSON map to the columns defined by the sales table</li>
          <li>16:39:40 UTC&nbsp; ERROR<br>ConvertJSONToSQL[id=76ec77ea-0181-1000-ff0e-4f7fff523dd3] Failed to convert FlowFile[filename=1.csv] to a SQL INSERT statement due to org.apache.nifi.processor.exception.ProcessException: None of the fields in the JSON map to the columns defined by the sales table; routing to failure: org.apache.nifi.processor.exception.ProcessException: None of the fields in the JSON map to the columns defined by the sales table</li>
          <li>16:39:40 UTC&nbsp; ERROR<br>ConvertJSONToSQL[id=76ec77ea-0181-1000-ff0e-4f7fff523dd3] Failed to convert FlowFile[filename=1.csv] to a SQL INSERT statement due to org.apache.nifi.processor.exception.ProcessException: None of the fields in the JSON map to the columns defined by the sales table; routing to failure: org.apache.nifi.processor.exception.ProcessException: None of the fields in the JSON map to the columns defined by the sales table</li>
          <li>16:39:40 UTC&nbsp; ERROR<br>ConvertJSONToSQL[id=76ec77ea-0181-1000-ff0e-4f7fff523dd3] Failed to convert FlowFile[filename=1.csv] to a SQL INSERT statement due to</li>
        </ul>
      </main>

      <footer class="crumbs">
        <a class="crumb-root">NiFi Flow</a>
        <span class="crumb-sep">»</span>
        <span class="crumb-cur">Sales csv data</span>
      </footer>
    </div>
  </div>
</body>
</html>
```

FILE: styles.css
```css
* {
  box-sizing: border-box;
}

body {
  margin: 0;
  width: 1920px;
  height: 1080px;
  overflow: hidden;
  display: flex;
  flex-direction: column;
  font-family: 'Roboto', sans-serif;
  background: #f9fafb;
}

.defs {
  position: absolute;
}

/* GNOME top bar */
.topbar {
  height: 27px;
  flex: none;
  display: flex;
  align-items: center;
  position: relative;
  background: #1c1c1c;
  color: #f0f0f0;
  font-family: 'Noto Sans', sans-serif;
  font-size: 14px;
}

.activities {
  margin-left: 12px;
}

.app-menu {
  margin-left: 36px;
  display: flex;
  align-items: center;
  gap: 6px;
}

.caret {
  display: inline-block;
  width: 0;
  height: 0;
  border-left: 5px solid transparent;
  border-right: 5px solid transparent;
  border-top: 6px solid #eee;
}

.clock {
  position: absolute;
  left: 950px;
}

.tray {
  margin-left: auto;
  margin-right: 16px;
  display: flex;
  align-items: center;
}

.tray-lang {
  margin-left: 23px;
  margin-right: 33px;
}

.tray-vol {
  margin-left: 10px;
}

.tray-pow {
  margin-left: 16px;
  margin-right: 10px;
}

.desktop {
  flex: 1;
  display: flex;
  min-height: 0;
}

/* Ubuntu dock */
.dock {
  width: 72px;
  flex: none;
  display: flex;
  flex-direction: column;
  align-items: center;
  padding-top: 2px;
  background: linear-gradient(#3e1b2f, #2c1528 60%, #231327);
}

.dock-slot {
  position: relative;
  width: 64px;
  height: 68px;
  flex: none;
  display: flex;
  align-items: center;
  justify-content: center;
  border-radius: 4px;
}

.dock-active {
  height: 64px;
  margin: 2px 0;
  background: #5d3f4c;
}

.dock-help {
  font-family: 'Noto Sans', sans-serif;
  font-size: 34px;
  fill: #fff;
}

.run-dot {
  position: absolute;
  left: 0;
  top: 31px;
  width: 6px;
  height: 6px;
  border-radius: 50%;
  background: #e95420;
}

.run-dot-a {
  top: 26px;
}

.run-dot-b {
  top: 35px;
}

.term-icon {
  width: 44px;
  height: 36px;
  padding: 1px 5px;
  border-radius: 4px;
  background: #4a4a48;
  color: #fff;
  font-family: 'DejaVu Sans Mono', monospace;
  font-size: 12px;
}

.dock-badge {
  position: absolute;
  left: 18px;
  top: 5px;
  width: 44px;
  height: 22px;
  border-radius: 11px;
  background: #169c26;
  color: #fff;
  font-family: 'Noto Sans', sans-serif;
  font-size: 12px;
  line-height: 22px;
  text-align: center;
}

.dock-apps {
  margin-top: auto;
  margin-bottom: 20px;
  display: grid;
  grid-template-columns: repeat(3, 6px);
  gap: 6px;
}

.dock-apps i {
  width: 6px;
  height: 6px;
  border-radius: 1px;
  background: #eee;
}

/* Firefox chrome */
.browser {
  flex: 1;
  min-width: 0;
  display: flex;
  flex-direction: column;
}

.tabs {
  height: 44px;
  flex: none;
  display: flex;
  align-items: center;
  background: #302e31;
  color: #f4f4f4;
  font-family: 'Noto Sans', sans-serif;
  font-size: 14px;
}

.tab {
  position: relative;
  width: 208.800px;
  height: 36px;
  flex: none;
  display: flex;
  align-items: center;
  padding-left: 10px;
  border-radius: 4px;
}

.fav {
  width: 16px;
  flex: none;
}

.tab-title {
  width: 156px;
  margin-left: 5px;
  overflow: hidden;
  white-space: nowrap;
  -webkit-mask-image: linear-gradient(to right, #000 85%, transparent);
  mask-image: linear-gradient(to right, #000 85%, transparent);
}

.tab-x {
  position: absolute;
  left: 183px;
  font-size: 16px;
  line-height: 16px;
}

.tab-active {
  background: #fff;
  color: #333;
}

.tab-new {
  margin-left: 11px;
  font-size: 22px;
  font-weight: 300;
}

.win-controls {
  margin-left: auto;
  margin-right: 9px;
  display: flex;
  align-items: center;
}

.win-min {
  width: 8px;
  height: 1px;
  margin-top: 6px;
  background: #eee;
}

.win-max {
  width: 7px;
  height: 8px;
  margin-left: 26px;
  border: 1px solid #eee;
}

.win-close {
  width: 18px;
  height: 18px;
  margin-left: 25px;
  border-radius: 50%;
  background: #e95420;
  color: #fff;
  font-size: 15px;
  line-height: 17px;
  text-align: center;
}

.navbar {
  height: 40px;
  flex: none;
  display: flex;
  align-items: center;
  background: #f9f9fa;
}

.nav-back {
  margin-left: 17px;
}

.nav-fwd {
  margin-left: 21px;
}

.nav-reload {
  margin-left: 21px;
}

.urlbar {
  width: 1385px;
  height: 32px;
  margin-left: 128px;
  display: flex;
  align-items: center;
  background: #fff;
  border: 1px solid #cfcfd8;
  border-radius: 4px;
}

.url-shield {
  margin-left: 7px;
}

.url-lock {
  margin-left: 13px;
}

.url-text {
  margin-left: 13px;
  color: #6d6d72;
  font-family: 'Noto Sans', sans-serif;
  font-size: 15px;
  white-space: nowrap;
}

.url-text b {
  color: #111;
  font-weight: 400;
}

.url-reader {
  margin-left: auto;
}

.url-star {
  margin-left: 12px;
  margin-right: 6px;
}

.nav-pocket {
  margin-left: 127px;
}

.nav-dl {
  margin-left: 18px;
}

.nav-menu {
  margin-left: 21px;
}

/* NiFi header */
.nf-header {
  height: 57px;
  flex: none;
  display: flex;
  align-items: center;
  background: #aabbc3;
}

.nf-logo {
  width: 135px;
  display: flex;
  align-items: center;
  padding-left: 14px;
  font-family: 'Roboto', sans-serif;
  font-size: 45px;
  font-weight: 900;
  line-height: 38px;
  letter-spacing: -1px;
}

.nf-logo-ni {
  color: #6d8795;
}

.nf-logo-fi {
  color: #f4f6f7;
}

.nf-drop {
  margin-left: 3px;
}

.nf-tools {
  display: flex;
  gap: 29px;
  color: #004849;
}

.nf-tool {
  flex: none;
}

.nf-user {
  margin-left: auto;
  display: flex;
  flex-direction: column;
  align-items: flex-end;
  gap: 7px;
  padding-top: 4px;
}

.nf-user-name {
  color: #262626;
  font-family: 'DejaVu Serif', serif;
  font-size: 11.500px;
}

.nf-logout {
  padding-bottom: 1px;
  border-bottom: 1px solid #eee;
  color: #004849;
  font-size: 12px;
}

.nf-burger {
  width: 27px;
  margin: 0 18px 0 18px;
  display: flex;
  flex-direction: column;
  gap: 4px;
}

.nf-burger i {
  height: 5px;
  background: #004849;
}

/* status bar */
.nf-status {
  position: relative;
  z-index: 2;
  height: 32px;
  flex: none;
  display: flex;
  align-items: center;
  gap: 70.600px;
  padding-left: 35px;
  background: #e3e8eb;
  border-bottom: 1px solid #aabbc3;
  box-shadow: 0 2px 4px rgba(0, 0, 0, .15);
  color: #775351;
  font-size: 15px;
  font-weight: 500;
}

.stat {
  display: flex;
  align-items: center;
}

.st-thread {
  margin-right: 11px;
}

.st-list {
  margin-right: 9px;
}

.st-target {
  margin-right: 7px;
}

.st-off {
  margin-right: 11px;
}

.st-play {
  margin-right: 9px;
}

.st-stop {
  margin-right: 8px;
}

.st-warn {
  margin-right: 8px;
}

.st-inv {
  margin-right: 11px;
}

.st-check {
  margin-right: 10px;
}

.st-star {
  margin-right: 10px;
}

.st-up {
  margin-right: 8px;
}

.st-excl {
  margin-right: 9px;
}

.st-q {
  width: 15px;
  color: #aabbc3;
  font-weight: 700;
}

.st-refresh {
  margin-right: 8px;
}

.st-search {
  position: absolute;
  right: 32px;
  top: 0;
  width: 32px;
  height: 31px;
  display: flex;
  align-items: center;
  justify-content: center;
  border-left: 1px solid #aabbc3;
}

.st-bulletin {
  position: absolute;
  right: 0;
  top: 0;
  width: 32px;
  height: 31px;
  display: flex;
  align-items: center;
  justify-content: center;
  background: #728e9b;
}

/* flow canvas */
.canvas {
  position: relative;
  flex: 1;
  min-height: 0;
  background-color: #f9fafb;
  background-image:
    linear-gradient(to right, #e3e8eb 1px, transparent 1px),
    linear-gradient(to bottom, #e3e8eb 1px, transparent 1px);
  background-size: 14px 14px;
}

.links {
  position: absolute;
  left: 0;
  top: 0;
}

/* palette panels */
.palette {
  position: absolute;
  left: 0;
  top: 23px;
  width: 287px;
  display: flex;
  flex-direction: column;
  gap: 3px;
}

.panel {
  background: #f9fafb;
  border: 1px solid #aabbc3;
  border-left: 0;
  box-shadow: 0 1px 4px rgba(0, 0, 0, .2);
}

.panel-nav {
  height: 237px;
}

.panel-op {
  height: 176px;
}

.panel-head {
  height: 29px;
  display: flex;
  align-items: center;
  padding: 0 9px 0 7px;
}

.panel-nav .panel-head {
  height: 31px;
}

.panel-op .panel-head {
  height: 34px;
}

.panel-title {
  margin-left: 9px;
  color: #262626;
  font-family: 'DejaVu Serif', serif;
  font-size: 11.500px;
  letter-spacing: .4px;
}

.panel-min {
  margin-left: auto;
}

.btn-row {
  display: flex;
  gap: 2px;
  padding-left: 10px;
  margin-bottom: 5px;
}

.panel-nav .btn-row {
  margin-top: 10px;
  margin-bottom: 5px;
}

.tbtn {
  width: 28px;
  height: 28px;
  flex: none;
  display: flex;
  align-items: center;
  justify-content: center;
  padding-right: 2px;
  border: 1px solid #ccdadb;
  background: #fbfcfc;
}

.tbtn-sep {
  margin-left: 10px;
}

.tbtn-end {
  margin-left: auto;
  margin-right: 10px;
}

.tbtn-off svg {
  opacity: .2;
}

.tbtn-delete {
  width: 75px;
  gap: 7px;
  color: #c5d0d4;
  font-size: 12px;
}

.birdseye {
  height: 150px;
  margin: 0 10px;
  background: #fff;
  border: 1px solid #e3e8eb;
}

.birdseye-view {
  position: relative;
  height: 127px;
  margin: 0;
  border: 2px solid #7b98a8;
  border-bottom-width: 2px;
}

.mini {
  position: absolute;
  width: 31px;
  height: 11px;
  background: #dde3ea;
}

.mini-a {
  left: 81px;
  top: 4px;
}

.mini-b {
  left: 131px;
  top: 4px;
}

.mini-c {
  left: 81px;
  top: 23px;
}

.mini-d {
  left: 80px;
  top: 39px;
}

.mini-e {
  left: 80px;
  top: 57px;
}

.mini-f {
  left: 140px;
  top: 55px;
}

.op-sel {
  display: flex;
  align-items: flex-start;
  gap: 9px;
  padding: 7px 0 0 7px;
}

.op-icon {
  flex: none;
  color: #ad9897;
}

.op-name {
  color: #262626;
  font-size: 15px;
  line-height: 18px;
}

.op-type {
  color: #728e9b;
  font-size: 12px;
  line-height: 16px;
}

.op-id {
  margin: 7px 0 8px 10px;
  color: #775351;
  font-size: 12px;
  line-height: 14px;
}

/* processors */
.proc {
  position: absolute;
  width: 220px;
  height: 80px;
  background: #fff;
  box-shadow: 0 1px 3px rgba(0, 0, 0, .3);
}

.proc-getfile {
  left: 574px;
  top: 43px;
}

.proc-wait {
  left: 923px;
  top: 43px;
}

.proc-split {
  left: 574px;
  top: 172px;
}

.proc-record {
  left: 569px;
  top: 287px;
}

.proc-json {
  left: 569px;
  top: 411px;
}

.proc-put {
  left: 988px;
  top: 401px;
}

.proc-selected {
  outline: 1px solid #004849;
}

.proc-ico {
  position: absolute;
  left: 6px;
  top: 4px;
  color: #ad9897;
}

.proc-shield {
  position: absolute;
  left: 5px;
  top: 4px;
  width: 5px;
  height: 7px;
  background: #ba554a;
  border-radius: 0 0 3px 3px;
}

.proc-run {
  position: absolute;
  left: 34px;
  top: 7px;
  color: #7dc7a0;
}

.proc-warn {
  left: 33px;
}

.proc-name {
  position: absolute;
  left: 46px;
  top: 3px;
  color: #262626;
  font-size: 9px;
  line-height: 10px;
}

.proc-type {
  position: absolute;
  left: 46px;
  top: 13px;
  color: #728e9b;
  font-size: 7.500px;
  line-height: 9px;
}

.proc-bundle {
  position: absolute;
  left: 46px;
  top: 23px;
  color: #728e9b;
  font-size: 5.500px;
  line-height: 7px;
}

.rows {
  position: absolute;
  left: 0;
  right: 0;
  top: 30px;
}

.row {
  height: 12px;
  display: flex;
  align-items: center;
  padding: 0 10px 0 6px;
  border-top: 1px solid #e3e8eb;
  background: #fff;
  font-size: 7.500px;
  color: #775351;
}

.row:nth-child(odd) {
  background: #f4f6f7;
}

.row .lbl {
  width: 47px;
  flex: none;
}

.lbl {
  color: #262626;
  font-family: 'DejaVu Serif', serif;
  font-size: 6.800px;
}

.val b {
  font-weight: 700;
}

.age {
  margin-left: auto;
  color: #728e9b;
}

.proc-bulletin {
  position: absolute;
  right: 0;
  top: 0;
  width: 16px;
  height: 15px;
  display: flex;
  align-items: center;
  justify-content: center;
  background: #ba554a;
}

.proc-cursor {
  position: absolute;
  left: 101px;
  top: 34px;
  width: 18px;
  height: 18px;
  display: flex;
  align-items: center;
  justify-content: center;
  border-radius: 50%;
  background: #004849;
}

/* connection labels */
.conn {
  position: absolute;
  width: 140px;
  height: 26px;
  background: #fff;
  box-shadow: 0 1px 3px rgba(0, 0, 0, .25);
  color: #775351;
  font-size: 7.500px;
}

.conn-a {
  left: 614px;
  top: 134px;
}

.conn-b {
  left: 612px;
  top: 256px;
}

.conn-c {
  left: 609px;
  top: 376px;
}

.conn-d {
  left: 818px;
  top: 433px;
}

.conn-e {
  left: 1207px;
  top: 444px;
  width: 143px;
}

.conn-name {
  height: 13px;
  padding-left: 4px;
  display: flex;
  align-items: center;
  gap: 4px;
  background: #f4f6f7;
  border-bottom: 1px solid #e3e8eb;
}

.conn-queue {
  position: relative;
  height: 13px;
  padding-left: 4px;
  display: flex;
  align-items: center;
  gap: 3px;
}

.bar {
  position: absolute;
  bottom: 0;
  width: 59px;
  height: 2px;
  background: #e3e8eb;
}

.bar-l {
  left: 4px;
}

.bar-r {
  left: 77px;
}

/* bulletins */
.bulletins {
  position: absolute;
  z-index: 5;
  left: 796px;
  top: 436px;
  width: 520px;
  height: 444px;
  margin: 0;
  padding: 13px 13px 0 25px;
  overflow: hidden;
  background: rgba(40, 40, 40, .9);
  color: #fff;
  font-size: 13px;
  font-weight: 500;
  line-height: 13px;
}

.bulletins li {
  margin-bottom: 6px;
}

/* breadcrumbs */
.crumbs {
  position: relative;
  z-index: 2;
  height: 32px;
  flex: none;
  display: flex;
  align-items: center;
  padding-left: 15px;
  background: #f9fafb;
  border-top: 1px solid #aabbc3;
  font-size: 13px;
}

.crumb-root {
  color: #004849;
  border-bottom: 1px solid #aabbc3;
  line-height: 16px;
}

.crumb-sep {
  margin: 0 15px;
  color: #004849;
  font-weight: 700;
}

.crumb-cur {
  color: #004849;
  font-weight: 700;
}
```
